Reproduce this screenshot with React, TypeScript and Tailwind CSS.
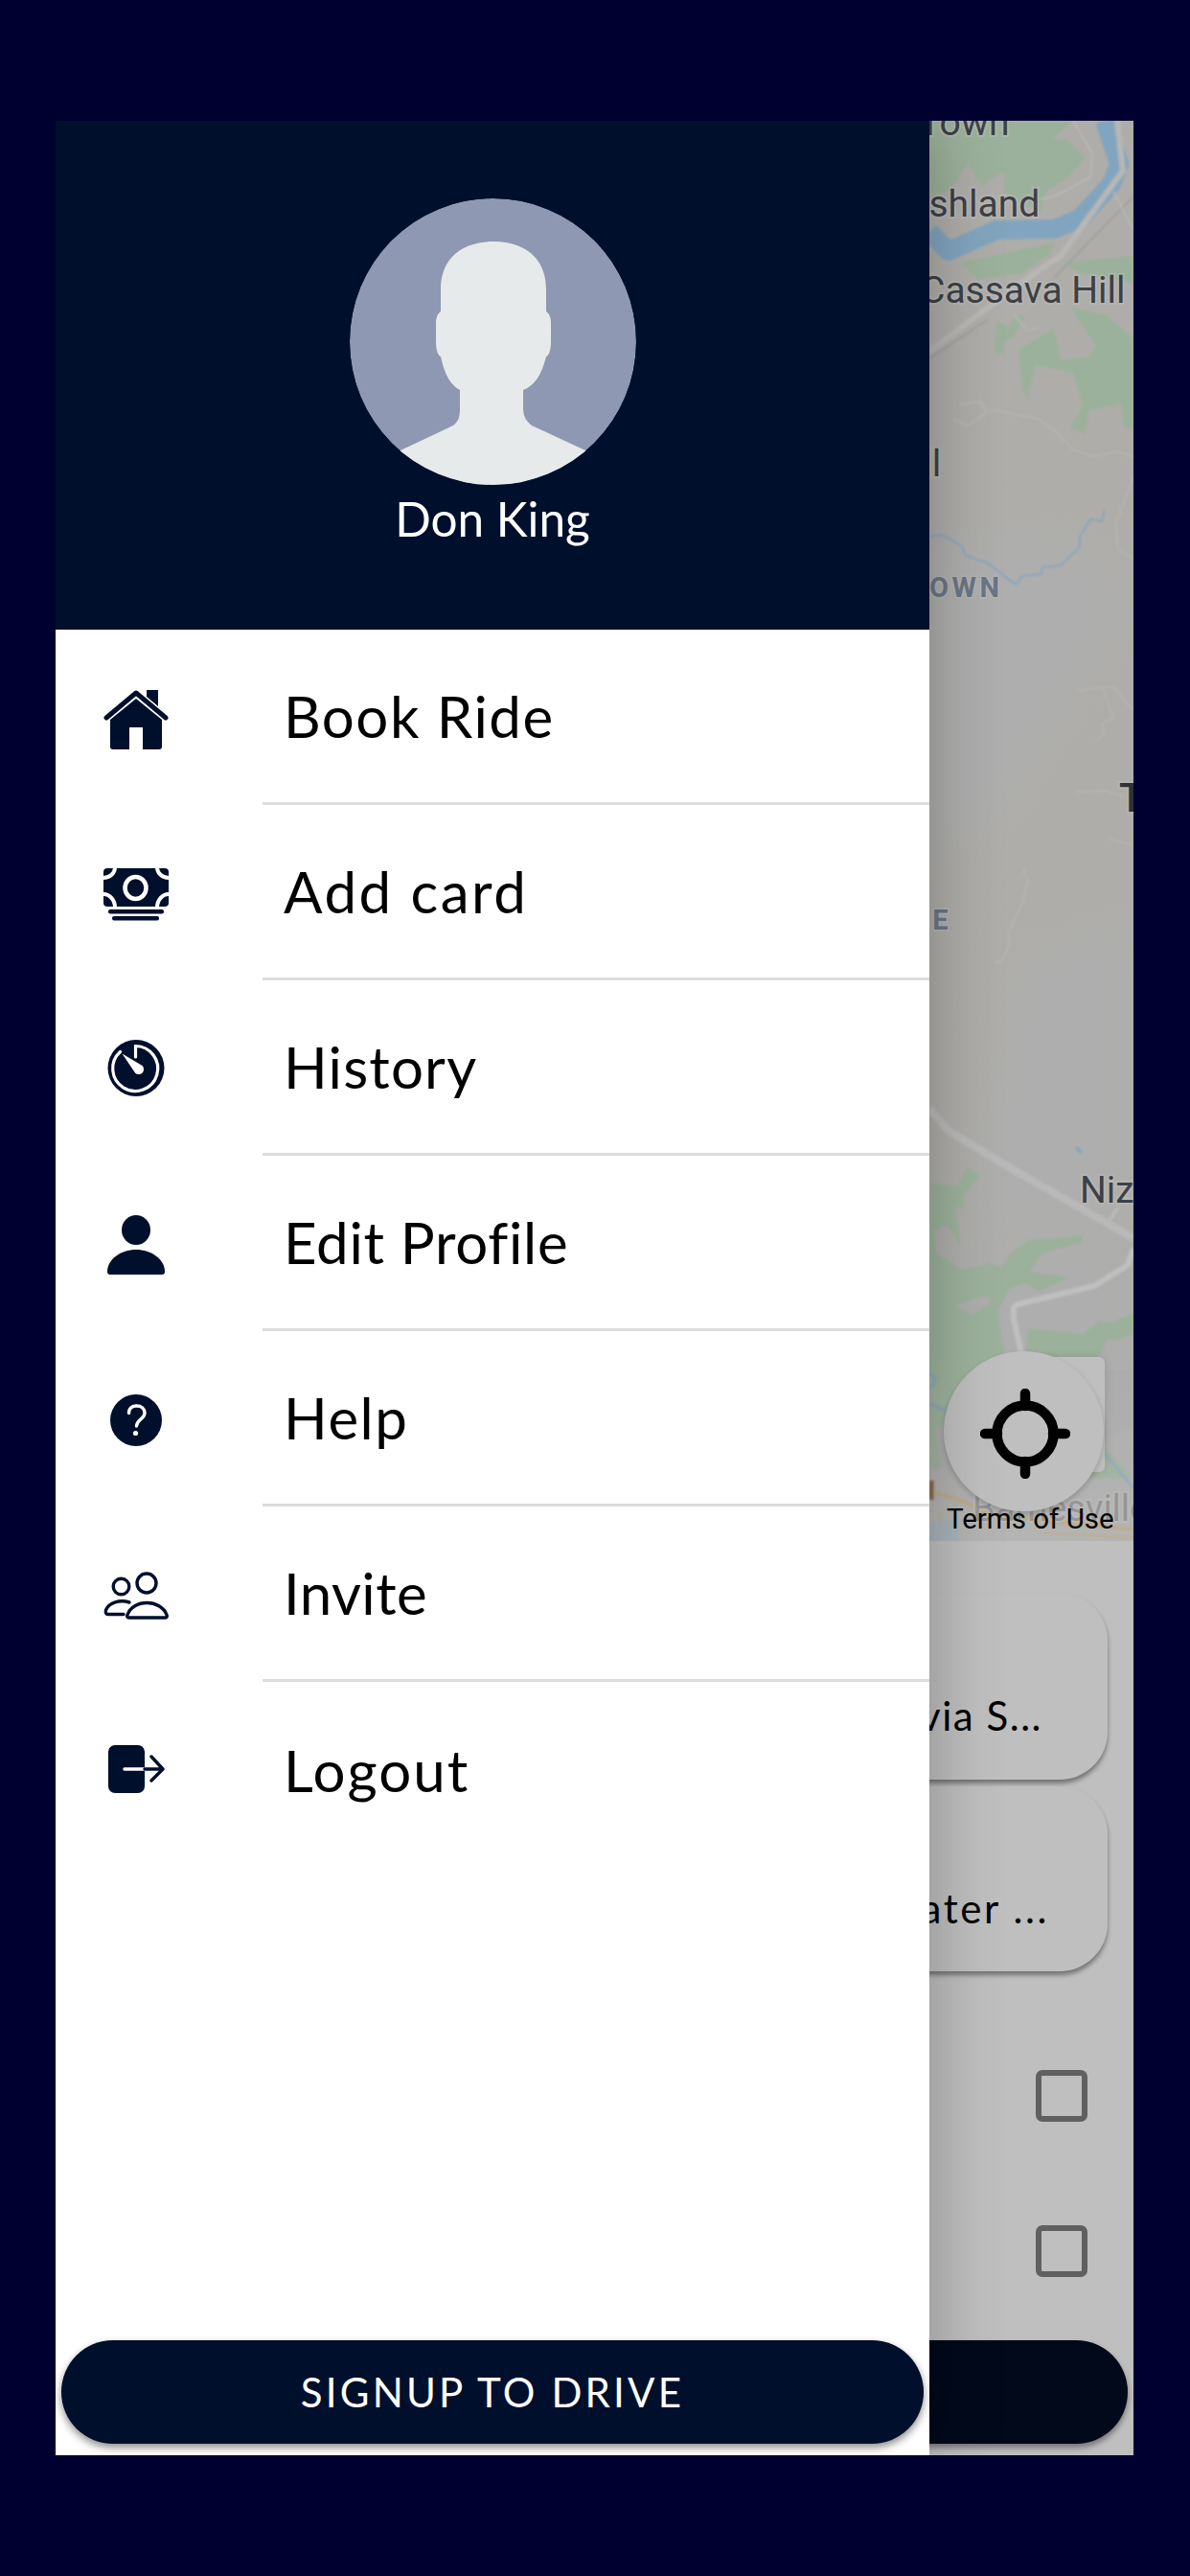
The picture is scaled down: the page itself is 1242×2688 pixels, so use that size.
import React from "react";

const NAVY = "#000f2c";

function HomeIcon() {
  return (
    <svg width="68" height="64" viewBox="0 0 68 64" className="mt-[2px]">
      <path d="M34 11 L61 33 V61 a3 3 0 0 1 -3 3 H41 V41 H27 V64 H10 a3 3 0 0 1 -3 -3 V33 Z" fill={NAVY} />
      <path d="M3 31 L34 5 L65 31" fill="none" stroke={NAVY} strokeWidth="5" strokeLinecap="round" strokeLinejoin="round" />
      <path d="M45 2 H57 V19 L45 9 Z" fill={NAVY} />
    </svg>
  );
}

function MoneyIcon() {
  return (
    <svg width="68" height="55" viewBox="0 0 68 55" className="mt-[3px]">
      <rect x="0" y="0" width="68" height="40" rx="4" fill={NAVY} />
      <ellipse cx="33.5" cy="20.5" rx="11" ry="11.5" fill="none" stroke="#fff" strokeWidth="4.5" />
      <path d="M12 -1 A12 11 0 0 1 0 10 M56 -1 A12 11 0 0 0 68 10 M12 41 A12 14 0 0 0 0 27 M56 41 A12 14 0 0 1 68 27" fill="none" stroke="#fff" strokeWidth="4" />
      <rect x="5" y="43" width="58" height="4.5" rx="2" fill={NAVY} />
      <rect x="9" y="50" width="49" height="4.5" rx="2" fill={NAVY} />
    </svg>
  );
}

function HistoryIcon() {
  return (
    <svg width="60" height="59" viewBox="0 0 60 59">
      <circle cx="30" cy="29.5" r="29.5" fill={NAVY} />
      <path d="M29.5 18 V6.5 A23.5 23.5 0 1 1 13.5 12.5" fill="none" stroke="#fff" strokeWidth="3.2" strokeLinecap="round" />
      <path d="M15.5 14.5 L36.5 27 A5.2 5.2 0 0 1 29 34.5 Z" fill="#fff" />
    </svg>
  );
}

function PersonIcon() {
  return (
    <svg width="60" height="62" viewBox="0 0 60 62" className="mt-[2px]">
      <ellipse cx="30" cy="15.5" rx="15" ry="15.5" fill={NAVY} />
      <path d="M3 62 a3 3 0 0 1 -3 -3 C0 46 14 36 30 36 C46 36 60 46 60 59 a3 3 0 0 1 -3 3 Z" fill={NAVY} />
    </svg>
  );
}

function HelpIcon() {
  return (
    <svg width="54" height="54" viewBox="0 0 54 54" className="mt-[2px]">
      <circle cx="27" cy="27" r="27" fill={NAVY} />
      <path d="M19.5 19.5 C19.5 14.5 23 12 27.5 12 C32.5 12 36 15 36 19.5 C36 25.5 28 26 27.5 33" fill="none" stroke="#fff" strokeWidth="3.4" strokeLinecap="round" />
      <circle cx="26.5" cy="40.5" r="2.6" fill="#fff" />
    </svg>
  );
}

function InviteIcon() {
  return (
    <svg width="68" height="50" viewBox="0 0 68 50" className="mt-[2px]" fill="none" stroke={NAVY} strokeWidth="3.4" strokeLinecap="round" strokeLinejoin="round">
      <circle cx="45" cy="12" r="10" />
      <circle cx="18.5" cy="15.5" r="8.3" />
      <path d="M26.5 48 H64 Q67 48 66 45 C63 37 54 32.5 45.5 32.5 C36 32.5 28 37 25 45 Q24 48 26.5 48 Z" />
      <path d="M27 32 C17 29 6 32 2.5 40 Q1.5 44.5 5 44.5 H21" />
    </svg>
  );
}

function LogoutIcon() {
  return (
    <svg width="59" height="50" viewBox="0 0 59 50" className="mb-[2px]">
      <rect x="0" y="0" width="38" height="50" rx="7" fill={NAVY} />
      <path d="M17 25 H38" stroke="#fff" strokeWidth="3.6" strokeLinecap="round" />
      <path d="M38 25 H57 M45 12 L57 25 L45 37" fill="none" stroke={NAVY} strokeWidth="3.4" strokeLinecap="round" strokeLinejoin="round" />
    </svg>
  );
}

function Avatar() {
  return (
    <svg width="299" height="299" viewBox="0 0 299 299" className="rounded-full">
      <circle cx="149.5" cy="149.5" r="149.5" fill="#8f98b2" />
      <path
        d="M95 118 V95 C95 62 118 45 150 45 C182 45 205 62 205 95 V118 C208 120 210 124 210 130 V150 C210 158 208 164 205 165 C200 185 193 195 181 200 V218 C181 228 184 232 190 237 L246 263 L300 290 V300 H0 V290 L53 263 L108 237 C114 232 115 228 115 218 V200 C106 195 99 185 95 165 C92 164 90 158 90 150 V130 C90 124 92 120 95 118 Z"
        fill="#e6eaea"
      />
    </svg>
  );
}

function MapArt() {
  const labelFont = "Roboto, sans-serif";
  return (
    <svg className="absolute inset-0" width="1125" height="1482" viewBox="58 126 1125 1482">
      <defs>
        <filter id="soft"><feGaussianBlur stdDeviation="22" /></filter>
        <filter id="softer"><feGaussianBlur stdDeviation="1" /></filter>
        <linearGradient id="fade" x1="0" y1="0" x2="0" y2="1">
          <stop offset="0" stopColor="#fff" stopOpacity="0" />
          <stop offset="1" stopColor="#fff" stopOpacity="0.38" />
        </linearGradient>
      </defs>
      <rect x="58" y="126" width="1125" height="1482" fill="#e9e7e2" />
      <g filter="url(#soft)" fill="#e8e8e8">
        <path d="M970 560 L1130 560 L1183 640 L1100 760 L1040 860 L970 900 Z" />
        <path d="M1060 1000 L1183 960 L1183 1280 L1000 1280 L1040 1120 Z" />
        <path d="M970 1300 H1183 V1608 H970 Z" />
      </g>
      <g filter="url(#softer)">
        <g fill="#d0edcf">
          <path d="M970 126 H1120 L1098 146 L1113 145 L1133 165 L1115 185 L1092 200 L1085 222 L1048 200 L1048 178 L1025 195 L1010 172 L990 200 L970 205 Z" />
          <path d="M1003 274 L1100 253 L1097 264 L1067 285 L1020 292 Z" />
          <path d="M1110 274 L1183 267 L1183 296 L1127 285 Z" />
          <path d="M1040 335 L1053 342 L1060 328 L1070 331 L1057 353 L1048 356 L1048 371 L1038 367 Z" />
          <path d="M1063 365 L1100 342 L1107 376 L1137 372 L1143 360 L1117 321 L1153 328 L1183 353 V446 L1173 447 L1170 421 L1137 428 L1133 453 L1117 446 L1130 424 L1120 389 L1080 381 L1073 419 L1067 406 Z" />
          <path fillRule="evenodd" d="M970 1235 L1000 1237 L1010 1217 L1023 1227 L1005 1248 L1007 1260 L997 1260 L1003 1300 L988 1278 L974 1285 L977 1307 L1003 1325 L1033 1318 L1046 1322 L1055 1307 L1073 1294 L1130 1289 L1130 1297 L1088 1307 L1075 1327 L1115 1333 L1085 1348 L1070 1339 L1053 1345 L1041 1368 L1048 1410 L1048 1530 L970 1533 Z M995 1362 L1032 1352 L1033 1360 L1015 1372 Z" />
          <path d="M1073 1386 L1130 1392 L1147 1378 L1160 1380 L1183 1370 V1392 L1165 1399 L1157 1397 L1145 1417 L1153 1510 L1183 1543 L1120 1543 L1060 1530 Z" />
        </g>
        <path d="M1120 1430 H1183 V1490 L1150 1500 Z" fill="#e5e5e5" />
        <path d="M977 1490 L1000 1485 L1000 1540 L985 1535 Z" fill="#e5e5e5" />
        <path d="M1058 1362 L1142 1342 L1177 1320 L1183 1303 M1058 1362 V1377 L1068 1420" fill="none" stroke="#fff" strokeWidth="6" />
        <path d="M970 1157 L990 1180 L1060 1222 L1183 1292" fill="none" stroke="#f7f7f7" strokeWidth="8" />
        <path d="M1167 1260 L1158 1273" fill="none" stroke="#f7f7f7" strokeWidth="4" />
        <path d="M1153 126 L1168 171 L1160 192 L1127 228 L1100 239 L1040 240 L990 262 L970 242" fill="none" stroke="#aeddff" strokeWidth="20" strokeLinejoin="round" />
        <path d="M970 367 L1027 324 L1080 285 L1107 267 L1172 178 L1166 126" fill="none" stroke="#f4f4f2" strokeWidth="6" strokeLinejoin="round" />
        <path d="M970 374 L1030 334 M1100 290 L1183 205" fill="none" stroke="#cfd0d2" strokeWidth="1.5" />
        <path d="M1120 126 L1140 160 L1138 185 L1100 205 L1085 208 M1162 200 L1183 240" fill="none" stroke="#f4f4f2" strokeWidth="2" />
        <g fill="none" stroke="#f1f1ef" strokeWidth="2">
          <path d="M1002 422 L1023 419 L1030 430 L1010 444 L995 437" />
          <path d="M1030 430 L1037 428 L1083 437 L1100 449 L1120 469 L1140 476 L1167 471 L1183 477" />
          <path d="M1183 496 L1165 546 L1167 574 L1183 583" />
          <path d="M1123 721 L1150 717 L1163 717 L1177 735 L1183 741 M1150 717 L1162 749 L1150 755 L1152 765 L1144 774" />
          <path d="M1123 826 L1153 825 L1173 831 M1158 875 L1177 881 L1183 881" />
          <path d="M1068 907 L1073 919 L1067 942 L1053 972 L1053 987 L1045 1004 L1038 1004" />
          <path d="M1058 328 L1072 345 L1083 342" />
        </g>
        <path d="M970 560 L983 558 L1003 569 L1008 580 L1030 587 L1060 610 L1067 601 L1087 599 L1088 592 L1107 590 L1127 571 L1127 560 L1138 542 L1150 544 L1153 531" fill="none" stroke="#aeddff" strokeWidth="1.6" />
        <path d="M1123 1197 L1129 1203" stroke="#aeddff" strokeWidth="3" />
        <path d="M970 1465 L988 1472 L1010 1478 M1153 1517 L1183 1553 M970 1433 L976 1438 L974 1446 L970 1448" fill="none" stroke="#aeddff" strokeWidth="2.5" />
        <path d="M975 1557 L1007 1567 L1030 1580 L1100 1588 L1183 1596" fill="none" stroke="#f9dc9b" strokeWidth="4" />
        <path d="M980 1580 L990 1608 M1090 1600 L1183 1604" fill="none" stroke="#f9dc9b" strokeWidth="2" />
        <path d="M972 1545 V1565" stroke="#9a5a2a" strokeWidth="5" />
        <path d="M970 1590 L1000 1584 V1608 H970 Z" fill="#cfe6f5" />
      </g>
      <rect x="970" y="1400" width="213" height="208" fill="url(#fade)" />
      <g fontFamily={labelFont} fill="#52565c" stroke="#fff" strokeOpacity="0.45" strokeWidth="4" paintOrder="stroke" fontSize="39">
        <text x="959" y="141">Town</text>
        <text x="944" y="226">Ashland</text>
        <text x="961" y="316">Cassava Hill</text>
        <text x="926" y="497">Hill</text>
        <text x="1127" y="1255">Nizza</text>
      </g>
      <text x="1168" y="847" fontFamily={labelFont} fontSize="42" fontWeight="500" fill="#3f434a" stroke="#fff" strokeOpacity="0.4" strokeWidth="4" paintOrder="stroke">Town</text>
      <g fontFamily={labelFont} fontSize="29" fontWeight="700" letterSpacing="3.5" fill="#8e9cb2" stroke="#fff" strokeOpacity="0.4" strokeWidth="3" paintOrder="stroke">
        <text x="949" y="623">TOWN</text>
        <text x="954" y="970">LE</text>
      </g>
      <text x="1015" y="1587" fontFamily={labelFont} fontSize="38" fill="#c9c9c9" stroke="#fff" strokeOpacity="0.5" strokeWidth="4" paintOrder="stroke">Barnesville</text>
    </svg>
  );
}

function Crosshair() {
  return (
    <svg width="94" height="94" viewBox="0 0 94 94" className="ml-[3px] mt-[4px]">
      <circle cx="47" cy="47" r="29.5" fill="none" stroke="#000" strokeWidth="10.5" />
      <path d="M47 5 V18 M47 76 V89 M5 47 H18 M76 47 H89" stroke="#000" strokeWidth="10.5" strokeLinecap="round" />
    </svg>
  );
}

function Checkbox() {
  return <div className="h-[54px] w-[54px] rounded-[7px] border-[6px] border-[#808080]" />;
}

function PlaceCard({ text, className }: { text: string; className: string }) {
  return (
    <div className={`flex items-end justify-end rounded-[50px] bg-white shadow-[0_4px_5px_rgba(0,0,0,0.4)] ${className}`}>
      <span className="whitespace-nowrap text-[42px] leading-[58px] text-black [font-family:Lato,sans-serif]">{text}</span>
    </div>
  );
}

const rows: { label: string; icon: React.ReactNode; track: string }[] = [
  { label: "Book Ride", icon: <HomeIcon />, track: "tracking-[1.5px]" },
  { label: "Add card", icon: <MoneyIcon />, track: "tracking-[2.5px]" },
  { label: "History", icon: <HistoryIcon />, track: "tracking-[1.2px]" },
  { label: "Edit Profile", icon: <PersonIcon />, track: "tracking-[0.7px]" },
  { label: "Help", icon: <HelpIcon />, track: "tracking-[1.5px]" },
  { label: "Invite", icon: <InviteIcon />, track: "tracking-[0.4px]" },
  { label: "Logout", icon: <LogoutIcon />, track: "tracking-[2px]" },
];

function Background() {
  return (
    <div className="flex h-full w-full flex-col bg-white">
      <div className="relative h-[1482px] w-full shrink-0 overflow-hidden">
        <MapArt />
        <div className="absolute left-[1002px] top-[1290px] h-[120px] w-[93px] rounded-[6px] bg-white shadow-[0_0_12px_rgba(0,0,0,0.12)]" />
        <div className="absolute left-[927px] top-[1284px] flex h-[167px] w-[167px] items-center justify-center rounded-full bg-white shadow-[0_3px_6px_rgba(0,0,0,0.2)]">
          <Crosshair />
        </div>
        <span className="absolute left-[930px] top-[1441px] whitespace-nowrap text-[29.5px] leading-[36px] text-black [font-family:Roboto,sans-serif]">
          Terms of Use
        </span>
      </div>
      <div className="ml-[540px] mr-[27px] mt-[54px] flex flex-col gap-[7px]">
        <PlaceCard text="Cassavia S..." className="h-[195px] pb-[38px] pr-[68px] tracking-[1.5px]" />
        <PlaceCard text="Greater ..." className="h-[193px] pb-[37px] pr-[61px] tracking-[2.6px]" />
      </div>
      <div className="mr-[48px] mt-[103px] flex flex-col items-end gap-[108px]">
        <Checkbox />
        <Checkbox />
      </div>
      <div className="mx-[6px] mt-auto mb-[12px] h-[108px] shrink-0 rounded-[54px] bg-[#020c24] shadow-[0_4px_6px_rgba(0,0,0,0.4)]" />
    </div>
  );
}

function Drawer() {
  return (
    <div className="absolute left-0 top-0 flex h-full w-[912px] flex-col bg-white shadow-[0_0_70px_rgba(0,0,0,0.28)]">
      <div className="flex h-[531px] shrink-0 flex-col items-center bg-[#000f2c] pt-[81px]">
        <Avatar />
        <span className="mt-[5px] text-[49.5px] leading-[60px] text-white [font-family:Lato,sans-serif]">Don King</span>
      </div>
      <div className="flex flex-col">
        {rows.map((r, i) => (
          <div key={r.label} className="flex h-[183px] items-stretch">
            <div className="flex w-[168px] shrink-0 items-center justify-center">{r.icon}</div>
            <div className={`ml-[48px] flex flex-1 items-center pl-[22px] ${i < rows.length - 1 ? "border-b-[3px] border-[#dcdcdc]" : ""}`}>
              <span className={`text-[60px] leading-[72px] text-black [font-family:Lato,sans-serif] ${r.track}`}>{r.label}</span>
            </div>
          </div>
        ))}
      </div>
      <button className="mx-[6px] mt-auto mb-[12px] flex h-[108px] shrink-0 items-center justify-center rounded-[54px] bg-[#000f2c] text-[42px] tracking-[3.2px] text-white shadow-[0_4px_8px_rgba(0,0,0,0.45)] [font-family:Lato,sans-serif]">
        SIGNUP TO DRIVE
      </button>
    </div>
  );
}

export default function App() {
  return (
    <div className="h-[2688px] w-[1242px] bg-[#000030] pl-[58px] pt-[126px]">
      <div className="relative h-[2436px] w-[1125px] overflow-hidden">
        <Background />
        <div className="absolute inset-0 bg-black/25" />
        <Drawer />
      </div>
    </div>
  );
}
